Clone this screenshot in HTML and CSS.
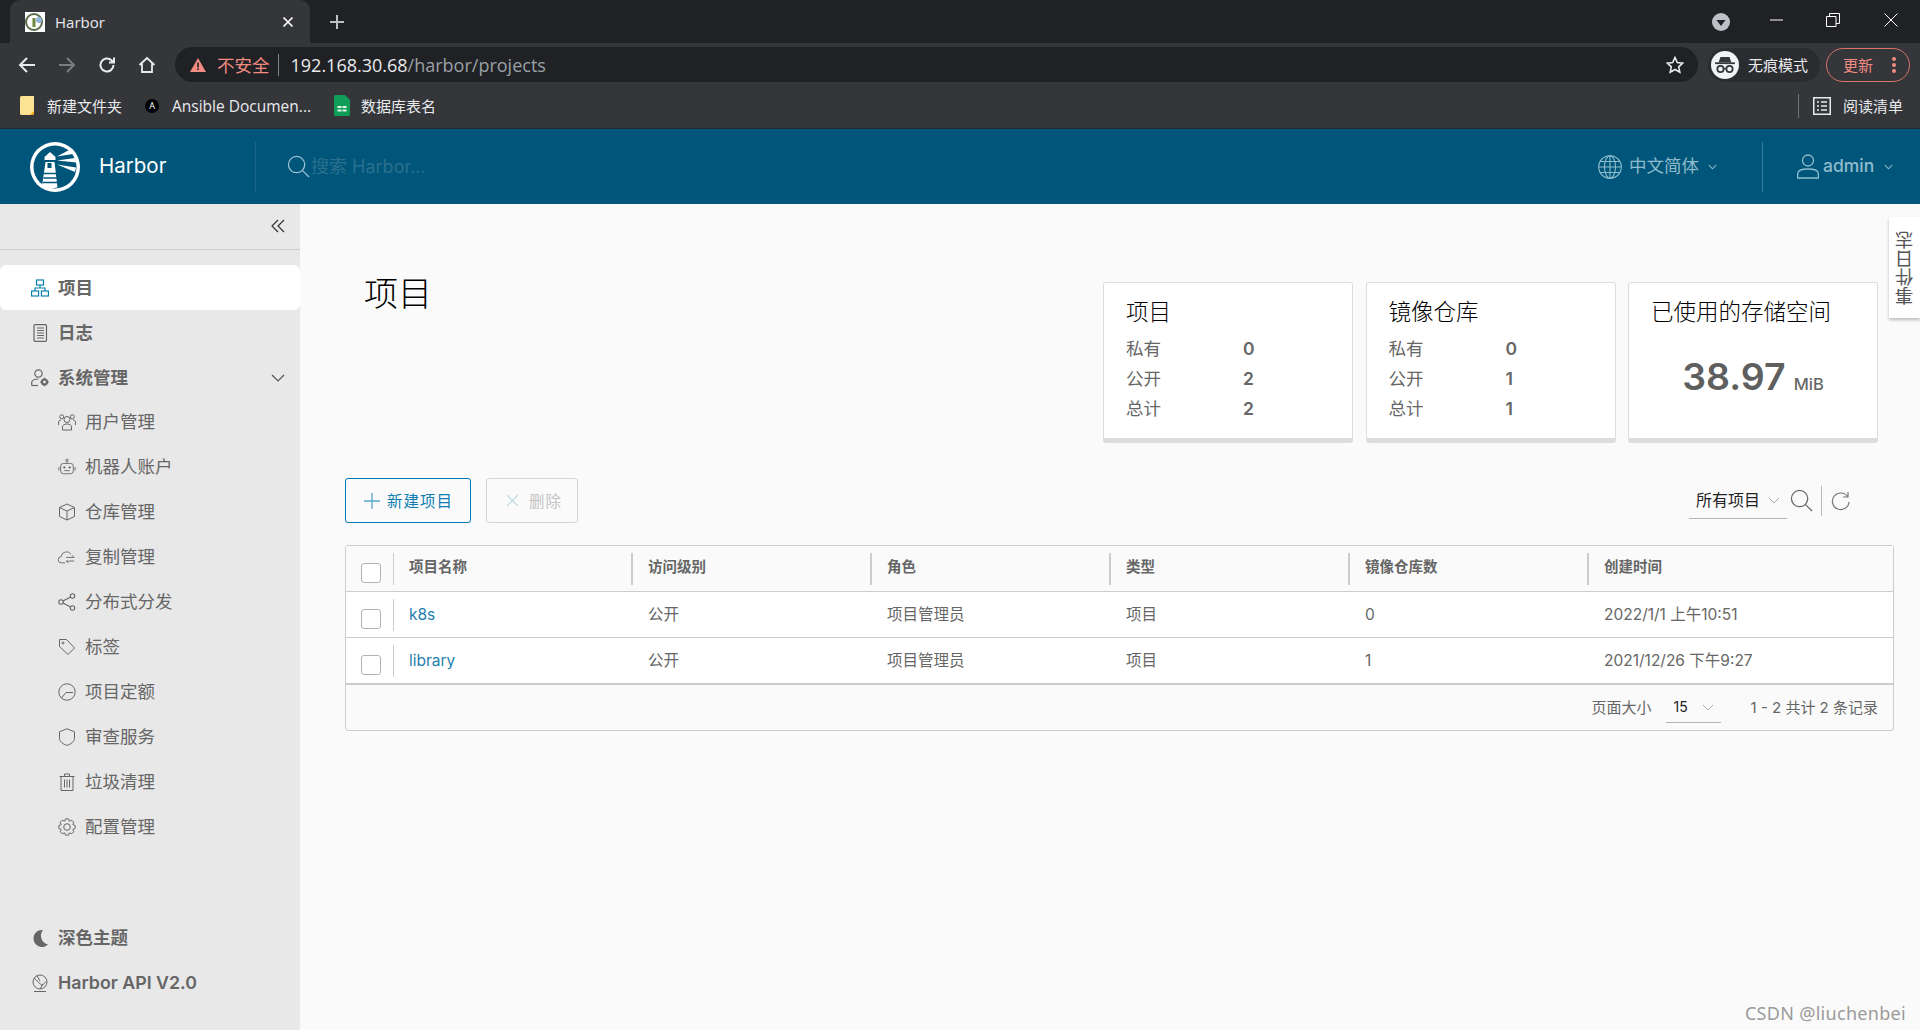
FILE: index.html
```html
<!DOCTYPE html>
<html lang="zh-CN">
<head>
<meta charset="utf-8">
<title>Harbor</title>
<link rel="stylesheet" href="styles.css">
</head>
<body>
<div class="chrome">
  <div class="tabstrip">
    <div class="tab">
      <svg class="favicon" viewBox="0 0 20 20"><rect width="20" height="20" fill="#fff"/><circle cx="9" cy="10" r="8" fill="none" stroke="#5a6b4a" stroke-width="2"/><rect x="7.500" y="6" width="3" height="9" fill="#6c8a3c"/><circle cx="14" cy="8" r="3" fill="#8fb6d8"/></svg>
      <span class="tab-title">Harbor</span>
      <svg class="tab-close" viewBox="0 0 12 12"><path d="M1.500 1.500l9 9M10.500 1.500l-9 9" stroke="#fff" stroke-width="1.700" fill="none"/></svg>
    </div>
    <svg class="newtab" viewBox="0 0 16 16"><path d="M8 1v14M1 8h14" stroke="#bdc1c6" stroke-width="2" fill="none"/></svg>
    <div class="win-controls">
      <svg class="tabsearch" viewBox="0 0 18 18"><circle cx="9" cy="9" r="9" fill="#bdc1c6"/><path d="M4.500 7h9L9 13z" fill="#202124"/></svg>
      <svg class="win-btn win-min" viewBox="0 0 14 14"><path d="M0 7h13" stroke="#fff" stroke-width="1" fill="none"/></svg>
      <svg class="win-btn win-max" viewBox="0 0 14 14"><path d="M.5 3.500h9.500v10H.5zM3.500 3.500V.5h10v10H10" stroke="#fff" stroke-width="1" fill="none"/></svg>
      <svg class="win-btn win-close" viewBox="0 0 14 14"><path d="M.5.5l13 13M13.500.5l-13 13" stroke="#fff" stroke-width="1" fill="none"/></svg>
    </div>
  </div>
  <div class="toolbar">
    <svg class="nav-icon" viewBox="0 0 18 18"><path d="M17 9H2M9 2L2 9l7 7" stroke="#e8eaed" stroke-width="2" fill="none"/></svg>
    <svg class="nav-icon" viewBox="0 0 18 18"><path d="M1 9h15M9 2l7 7-7 7" stroke="#7b7d80" stroke-width="2" fill="none"/></svg>
    <svg class="nav-icon" viewBox="0 0 18 18"><path d="M15.500 9a6.500 6.500 0 1 1-2-4.700L16 6.500M16 1.500v5h-5" stroke="#e8eaed" stroke-width="2" fill="none"/></svg>
    <svg class="nav-icon" viewBox="0 0 18 18"><path d="M1.500 9L9 2l7.500 7M4 7.500V16h10V7.500" stroke="#e8eaed" stroke-width="1.800" fill="none"/></svg>
    <div class="omnibox">
      <svg class="warn" viewBox="0 0 16 14"><path d="M8 0l8 14H0z" fill="#f28b82"/><path d="M7.200 4.500h1.600v5H7.200zM7.200 10.500h1.600v1.600H7.200z" fill="#202124"/></svg>
      <span class="insecure">不安全</span>
      <span class="omni-sep"></span>
      <span class="url-host">192.168.30.68</span><span class="url-path">/harbor/projects</span>
      <svg class="star" viewBox="0 0 18 18"><path d="M9 1.500l2.300 5 5.400.6-4 3.700 1.100 5.400L9 13.500l-4.800 2.700 1.100-5.400-4-3.700 5.400-.6z" fill="none" stroke="#e8eaed" stroke-width="1.600"/></svg>
    </div>
    <div class="incognito">
      <span class="incog-badge"><svg viewBox="0 0 24 20"><path d="M7 1h10l2 6H5z" fill="#35363a"/><path d="M1 8h22" stroke="#35363a" stroke-width="2"/><circle cx="7" cy="14.500" r="3.500" fill="none" stroke="#35363a" stroke-width="2"/><circle cx="17" cy="14.500" r="3.500" fill="none" stroke="#35363a" stroke-width="2"/><path d="M10.500 14h3" stroke="#35363a" stroke-width="1.500"/></svg></span>
      <span>无痕模式</span>
    </div>
    <div class="update"><span>更新</span><svg viewBox="0 0 4 16" class="update-dots"><circle cx="2" cy="2" r="2"/><circle cx="2" cy="8" r="2"/><circle cx="2" cy="14" r="2"/></svg></div>
  </div>
  <div class="bookmarks">
    <div class="bookmark"><svg class="bm-folder" viewBox="0 0 15 19"><path d="M0 1.500A1.500 1.500 0 0 1 1.500 0H14v17a2 2 0 0 1-2 2H1.500A1.500 1.500 0 0 1 0 17.500z" fill="#fde293"/><path d="M10 19l4-4v2a2 2 0 0 1-2 2z" fill="#f9ab00"/></svg><span>新建文件夹</span></div>
    <div class="bookmark"><span class="ansible-logo">A</span><span class="bm-latin">Ansible Documen...</span></div>
    <div class="bookmark"><svg class="bm-sheet" viewBox="0 0 16 21"><path d="M1.500 0H11l5 5v14.500a1.500 1.500 0 0 1-1.500 1.500h-13A1.500 1.500 0 0 1 0 19.500v-18A1.500 1.500 0 0 1 1.500 0z" fill="#0f9d58"/><path d="M3.500 11h4v2h-4zM8.500 11h4v2h-4zM3.500 14.500h4v2h-4zM8.500 14.500h4v2h-4z" fill="#e6f4ea"/></svg><span>数据库表名</span></div>
    <div class="reading-list">
      <svg class="rl-icon" viewBox="0 0 18 18"><rect x=".75" y=".75" width="16.500" height="16.500" fill="none" stroke="#e8eaed" stroke-width="1.500"/><path d="M4 5h2M8 5h6M4 9h2M8 9h6M4 13h2M8 13h6" stroke="#e8eaed" stroke-width="1.500"/></svg>
      <span>阅读清单</span>
    </div>
  </div>
</div>

<header class="app-header">
  <div class="brand">
    <svg class="logo" viewBox="0 0 50 50">
      <circle cx="25" cy="25" r="25" fill="#fff"/>
      <circle cx="25" cy="25" r="21.500" fill="#00567a"/>
      <path d="M12 44.500L15.500 20h9l3 25.500q-8 2-15.500-1z" fill="#fff"/>
      <path d="M20 10l5.500 5v3h-11v-3z" fill="#fff"/>
      <rect x="17.500" y="21" width="4" height="5" fill="#00567a"/>
      <path d="M14 31.500h12M13.500 36h13.500M13 40.500h14" stroke="#00567a" stroke-width="1.300"/>
      <path d="M27 14.500l13-7 3 4.500zM27 18.500l18-2.500 1.500 4.500zM27 22.500l19 3-1 4.500z" fill="#fff"/>
    </svg>
    <span class="brand-name">Harbor</span>
  </div>
  <div class="search">
    <svg class="search-icon" viewBox="0 0 24 24"><circle cx="10" cy="10" r="8.500" fill="none" stroke="#9dc3d4" stroke-width="1.300"/><path d="M16 16l7 7" stroke="#9dc3d4" stroke-width="1.300"/></svg>
    <span class="search-text">搜索 Harbor...</span>
  </div>
  <div class="lang">
    <svg class="globe" viewBox="0 0 24 24" fill="none" stroke="#8fbccd" stroke-width="1.100"><circle cx="12" cy="12" r="11.300"/><ellipse cx="12" cy="12" rx="5.500" ry="11.300"/><path d="M12 .7v22.600M.7 12h22.600M2.300 6.500h19.400M2.300 17.500h19.400"/></svg>
    <span class="hdr-label">中文简体</span>
    <svg class="hdr-caret" viewBox="0 0 10 6"><path d="M1 1l4 4 4-4" fill="none" stroke="#8fbccd" stroke-width="1.200"/></svg>
  </div>
  <div class="user">
    <svg class="user-icon" viewBox="0 0 22 25" fill="none" stroke="#8fbccd" stroke-width="1.300"><circle cx="11" cy="6.500" r="5.500"/><path d="M.7 24v-4.500c0-3 4.500-4.500 10.300-4.500s10.300 1.500 10.300 4.500V24z"/></svg>
    <span class="hdr-label">admin</span>
    <svg class="hdr-caret" viewBox="0 0 10 6"><path d="M1 1l4 4 4-4" fill="none" stroke="#8fbccd" stroke-width="1.200"/></svg>
  </div>
</header>

<div class="workspace">
  <aside class="sidebar">
    <div class="collapse-row">
      <svg class="collapse" viewBox="0 0 14 14"><path d="M7 1L1 7l6 6M13 1L7 7l6 6" fill="none" stroke="#333" stroke-width="1.200"/></svg>
    </div>
    <nav class="nav">
      <a class="nav-item top active"><svg class="ni" viewBox="0 0 18 18" fill="none" stroke="#0f7fb3" stroke-width="1.200"><rect x="5.500" y="1" width="7" height="5"/><rect x=".6" y="12" width="7" height="5"/><rect x="10.400" y="12" width="7" height="5"/><path d="M9 6v3M4 12V9h10v3"/></svg>项目</a>
      <a class="nav-item top"><svg class="ni" viewBox="0 0 18 18" fill="none" stroke="#666" stroke-width="1.200"><rect x="3" y=".7" width="12.500" height="16.600" rx="1"/><path d="M6 4h7M6 6.500h7M6 9h7M6 11.500h7M6 14h7"/></svg>日志</a>
      <a class="nav-item top"><svg class="ni" viewBox="0 0 18 18" fill="none" stroke="#666" stroke-width="1.200"><circle cx="7.500" cy="4.500" r="3.700"/><path d="M.7 16.500v-3c0-2 3-3.500 6.500-3.500"/><path d="M7 16.500H.7"/><circle cx="13.500" cy="13" r="2.500" stroke-width="2.200"/><path d="M13.500 8.800v1.500M13.500 15.700v1.500M9.300 13h1.500M16.200 13h1.500" stroke-width="1.500"/></svg>系统管理<svg class="nav-caret" viewBox="0 0 14 8"><path d="M1 1l6 6 6-6" fill="none" stroke="#555" stroke-width="1.200"/></svg></a>
      <a class="nav-item sub"><svg class="ni" viewBox="0 0 18 18" fill="none" stroke="#666" stroke-width="1"><circle cx="9" cy="6.500" r="3"/><path d="M4.500 17v-3c0-2 2-3 4.500-3s4.500 1 4.500 3v3z"/><circle cx="3.700" cy="3.800" r="2"/><circle cx="14.300" cy="3.800" r="2"/><path d="M.6 12V9c0-1.200 1-2 2.400-2M17.400 12V9c0-1.200-1-2-2.400-2"/></svg>用户管理</a>
      <a class="nav-item sub"><svg class="ni" viewBox="0 0 20 20" fill="none" stroke="#666" stroke-width="1"><rect x="3" y="6" width="14" height="11.500" rx="3"/><circle cx="10" cy="2.500" r="1.300"/><path d="M10 3.800V6M1 10v4M19 10v4M7 14h6"/><circle cx="7" cy="10.500" r=".8" fill="#666"/><circle cx="13" cy="10.500" r=".8" fill="#666"/></svg>机器人账户</a>
      <a class="nav-item sub"><svg class="ni" viewBox="0 0 18 18" fill="none" stroke="#666" stroke-width="1"><path d="M9 1l7.500 3.500v9L9 17l-7.500-3.500v-9zM1.500 4.500L9 8l7.500-3.500M9 8v9"/></svg>仓库管理</a>
      <a class="nav-item sub"><svg class="ni" viewBox="0 0 20 18" fill="none" stroke="#666" stroke-width="1"><path d="M8 15.500H4a3.500 3.500 0 0 1-.5-7A6 6 0 0 1 14.500 6"/><path d="M9 9.500h9M15.500 7l2.500 2.500M9 13.500h9M9 13.500l2.500 2"/></svg>复制管理</a>
      <a class="nav-item sub"><svg class="ni" viewBox="0 0 18 18" fill="none" stroke="#666" stroke-width="1.100"><circle cx="3" cy="9" r="2.200"/><circle cx="14.500" cy="3" r="2.200"/><circle cx="14.500" cy="15" r="2.200"/><path d="M5 8l7.500-4M5 10l7.500 4"/></svg>分布式分发</a>
      <a class="nav-item sub"><svg class="ni" viewBox="0 0 18 18" fill="none" stroke="#666" stroke-width="1"><path d="M1.500 1.500h7l8 8.500-6.500 6.500-8.500-8z"/><circle cx="5" cy="5" r="1"/></svg>标签</a>
      <a class="nav-item sub"><svg class="ni" viewBox="0 0 18 18" fill="none" stroke="#666" stroke-width="1"><circle cx="9" cy="9" r="8.200"/><path d="M3.500 15L8 9.500h7"/></svg>项目定额</a>
      <a class="nav-item sub"><svg class="ni" viewBox="0 0 18 18" fill="none" stroke="#666" stroke-width="1"><path d="M9 .8l7.500 3v6.500c0 3.200-3.500 6-7.500 7-4-1-7.500-3.800-7.500-7V3.800z"/></svg>审查服务</a>
      <a class="nav-item sub"><svg class="ni" viewBox="0 0 18 18" fill="none" stroke="#666" stroke-width="1"><path d="M1.500 3.500h15M3 3.500v14h12v-14M6.500 3.500V1h5v2.500M6.500 6.500v8M9 6.500v8M11.500 6.500v8"/></svg>垃圾清理</a>
      <a class="nav-item sub"><svg class="ni" viewBox="0 0 18 18" fill="none" stroke="#666" stroke-width="1" stroke-linejoin="round"><polygon points="14.820,6.590 17.170,7.560 17.170,10.440 14.820,11.410 15.800,13.760 13.760,15.800 11.410,14.820 10.440,17.170 7.560,17.170 6.590,14.820 4.240,15.800 2.200,13.760 3.180,11.410 .83,10.440 .83,7.560 3.180,6.590 2.200,4.240 4.240,2.200 6.590,3.180 7.560,.83 10.440,.83 11.410,3.180 13.760,2.200 15.800,4.240"/><circle cx="9" cy="9" r="3.300"/></svg>配置管理</a>
    </nav>
    <div class="nav-bottom">
      <a class="nav-item top"><svg class="ni" viewBox="0 0 18 18"><path d="M12 1a8.500 8.500 0 1 0 5 14.500A9 9 0 0 1 12 1z" fill="#666"/></svg>深色主题</a>
      <a class="nav-item top api"><svg class="ni" viewBox="0 0 18 18" fill="none" stroke="#666" stroke-width="1"><circle cx="9" cy="8" r="7"/><path d="M3 4l8 7.500 4-4M6 1.500L9 7M9 15l3-5M3 17.500h12"/></svg>Harbor API V2.0</a>
    </div>
  </aside>

  <main class="main">
    <div class="summary">
      <h1 class="page-title">项目</h1>
      <div class="cards">
        <section class="card">
          <h2 class="card-title">项目</h2>
          <div class="stat"><span class="stat-label">私有</span><span class="stat-val">0</span></div>
          <div class="stat"><span class="stat-label">公开</span><span class="stat-val">2</span></div>
          <div class="stat"><span class="stat-label">总计</span><span class="stat-val">2</span></div>
        </section>
        <section class="card">
          <h2 class="card-title">镜像仓库</h2>
          <div class="stat"><span class="stat-label">私有</span><span class="stat-val">0</span></div>
          <div class="stat"><span class="stat-label">公开</span><span class="stat-val">1</span></div>
          <div class="stat"><span class="stat-label">总计</span><span class="stat-val">1</span></div>
        </section>
        <section class="card">
          <h2 class="card-title">已使用的存储空间</h2>
          <div class="storage"><span class="storage-num">38.97</span><span class="storage-unit">MiB</span></div>
        </section>
      </div>
    </div>

    <div class="actions">
      <button class="btn btn-primary"><svg class="btn-icon" viewBox="0 0 16 16"><path d="M8 0v16M0 8h16" stroke="#5aa9cc" stroke-width="1.300" fill="none"/></svg><span class="btn-label">新建项目</span></button>
      <button class="btn btn-disabled"><svg class="btn-icon-x" viewBox="0 0 14 14"><path d="M1 1l12 12M13 1L1 13" stroke="#b5d5e2" stroke-width="1.200" fill="none"/></svg><span class="btn-label">删除</span></button>
      <div class="filter">
        <div class="select"><span>所有项目</span><svg class="sel-caret" viewBox="0 0 12 7"><path d="M1 1l5 5 5-5" fill="none" stroke="#aaa" stroke-width="1"/></svg></div>
        <svg class="f-search" viewBox="0 0 24 24"><circle cx="10" cy="10" r="8.500" fill="none" stroke="#666" stroke-width="1.300"/><path d="M16 16l7 7" stroke="#666" stroke-width="1.300"/></svg>
        <span class="f-sep"></span>
        <svg class="f-refresh" viewBox="0 0 20 20"><path d="M16.500 5.500A8.300 8.300 0 1 0 18 11M17 1v5h-5" fill="none" stroke="#777" stroke-width="1.200"/></svg>
      </div>
    </div>

    <div class="datagrid">
      <div class="row head">
        <div class="cell check"><span class="checkbox"></span></div>
        <div class="cell">项目名称</div><div class="cell">访问级别</div><div class="cell">角色</div><div class="cell">类型</div><div class="cell">镜像仓库数</div><div class="cell">创建时间</div>
      </div>
      <div class="row">
        <div class="cell check"><span class="checkbox"></span></div>
        <div class="cell"><a class="link">k8s</a></div><div class="cell">公开</div><div class="cell">项目管理员</div><div class="cell">项目</div><div class="cell">0</div><div class="cell">2022/1/1 上午10:51</div>
      </div>
      <div class="row last">
        <div class="cell check"><span class="checkbox"></span></div>
        <div class="cell"><a class="link">library</a></div><div class="cell">公开</div><div class="cell">项目管理员</div><div class="cell">项目</div><div class="cell">1</div><div class="cell">2021/12/26 下午9:27</div>
      </div>
      <div class="grid-foot">
        <span>页面大小</span>
        <div class="page-select"><span>15</span><svg class="sel-caret" viewBox="0 0 12 7"><path d="M1 1l5 5 5-5" fill="none" stroke="#aaa" stroke-width="1"/></svg></div>
        <span>1 - 2 共计 2 条记录</span>
      </div>
    </div>

    <div class="event-tab"><span>事件日志</span></div>
    <div class="watermark">CSDN @liuchenbei</div>
  </main>
</div>
</body>
</html>
```
FILE: styles.css
```css
* { box-sizing: border-box; }
html, body { margin: 0; padding: 0; height: 100%; overflow: hidden; }
body {
  display: flex; flex-direction: column; width: 1920px; height: 1030px;
  font-family: Inter, "Noto Sans CJK SC", sans-serif; color: #666; background: #fafafa;
  line-height: 22px;
}
.chrome { font-family: "Open Sans", "Noto Sans CJK SC", sans-serif; color: #e8eaed; flex: none; }
.tabstrip { height: 43px; background: #202124; display: flex; align-items: center; padding-left: 10px; }
.tab { width: 300px; height: 43px; background: #35363a; border-radius: 10px 10px 0 0; display: flex; align-items: center; padding: 0 15px; align-self: flex-end; }
.favicon { width: 20px; height: 20px; margin-right: 10px; }
.tab-title { font-size: 15px; flex: 1; color: #e8eaed; }
.tab-close { width: 12px; height: 12px; margin-right: 1px; }
.newtab { width: 16px; height: 16px; margin-left: 19px; }
.win-controls { margin-left: auto; display: flex; align-items: center; padding-right: 22px; }
.tabsearch { width: 18px; height: 18px; margin-right: 40px; margin-top: 1px; }
.win-btn { width: 14px; height: 14px; }
.win-min { margin-right: 42px; margin-top: -3px; }
.win-max { margin-right: 44px; margin-top: -4px; }
.win-close { margin-top: -4px; }

.toolbar { height: 40px; background: #35363a; display: flex; align-items: center; padding-left: 18px; padding-top: 3px; }
.nav-icon { width: 18px; height: 18px; margin-right: 22px; flex: none; }
.omnibox { width: 1523px; height: 35px; margin-left: -3px; background: #202124; border-radius: 18px; display: flex; align-items: center; padding: 0 14px 0 15px; }
.warn { width: 16px; height: 14px; margin-right: 11px; }
.insecure { font-size: 17.500px; color: #f28b82; }
.omni-sep { width: 1px; height: 22px; background: #80868b; margin: 0 12px 0 8px; }
.url-host { font-size: 18px; color: #e8eaed; }
.url-path { font-size: 18px; color: #9aa0a6; }
.star { width: 18px; height: 18px; margin-left: auto; }
.incognito { width: 112px; height: 34px; margin-left: 10px; border-radius: 17px; background: #2b2c30; display: flex; align-items: center; font-size: 15px; color: #e8eaed; padding-left: 3px; gap: 9px; }
.incog-badge { width: 28px; height: 28px; border-radius: 50%; background: #f1f3f4; display: flex; align-items: center; justify-content: center; }
.incog-badge svg { width: 22px; height: 18px; }
.update { width: 84px; height: 34px; margin-left: 6px; border: 1px solid #d9736b; border-radius: 17px; color: #f28b82; font-size: 15px; display: flex; align-items: center; padding-left: 16px; }
.update-dots { width: 4px; height: 16px; margin-left: 19px; fill: #f28b82; }

.bookmarks { height: 46px; background: #35363a; display: flex; align-items: center; padding-left: 20px; border-bottom: 1px solid #26272a; font-size: 15px; }
.bookmark { display: flex; align-items: center; margin-right: 23px; color: #e8eaed; }
.bm-latin { font-size: 15.500px; }
.bm-folder { width: 15px; height: 19px; margin-right: 12px; }
.ansible-logo { width: 14px; height: 14px; border-radius: 50%; background: #000; color: #fff; font-size: 9px; line-height: 14px; text-align: center; margin-right: 13px; }
.bm-sheet { width: 16px; height: 21px; margin-right: 11px; }
.reading-list { margin-left: auto; display: flex; align-items: center; height: 24px; border-left: 1px solid #6e7074; padding-left: 14px; padding-right: 17px; }
.rl-icon { width: 18px; height: 18px; margin-right: 12px; }

.app-header { height: 75px; flex: none; background: #00567a; display: flex; align-items: center; color: #8fbccd; }
.brand { width: 256px; height: 50px; display: flex; align-items: center; padding-left: 30px; border-right: 1px solid #1a6787; }
.logo { width: 50px; height: 50px; margin-right: 19px; }
.brand-name { font-size: 20.500px; color: #fff; font-weight: 400; padding-bottom: 2px; }
.search { display: flex; align-items: center; padding-left: 31px; flex: 1; }
.search-icon { width: 23px; height: 23px; margin-right: 1px; }
.search-text { font-size: 18px; color: #2a6f8e; }
.lang { display: flex; align-items: center; font-size: 17.500px; height: 50px; width: 164px; }
.globe { width: 24px; height: 24px; margin-right: 7px; }
.hdr-label { padding-bottom: 2px; }
.hdr-caret { width: 9px; height: 6px; margin-left: 9px; }
.user { display: flex; align-items: center; font-size: 17.500px; height: 50px; border-left: 1px solid #3a7d99; width: 158px; padding-left: 34px; }
.user-icon { width: 22px; height: 25px; margin-right: 4px; }
.user span { font-weight: 500; }
.user .hdr-caret { margin-left: 10px; }

.workspace { flex: 1; display: flex; min-height: 0; position: relative; }
.sidebar { width: 300px; flex: none; background: #e8e8e8; display: flex; flex-direction: column; }
.collapse-row { height: 46px; flex: none; border-bottom: 1px solid #ccc; display: flex; align-items: center; justify-content: flex-end; padding-right: 15px; }
.collapse { width: 14px; height: 14px; margin-bottom: 1px; }
.nav { padding-top: 15px; }
.nav-item { height: 45px; display: flex; align-items: center; color: #666; font-size: 17.500px; }
.nav-item.top { font-weight: 700; padding-left: 31px; }
.nav-item.active { background: #fff; border-radius: 6px; }
.nav-item.sub { padding-left: 58px; font-weight: 400; padding-bottom: 2px; }
.ni { width: 18px; height: 18px; margin-right: 9px; flex: none; }
.nav-caret { width: 14px; height: 8px; margin-left: auto; margin-right: 15px; }
.nav-bottom { margin-top: auto; padding-bottom: 25px; }
.api { font-family: Inter, sans-serif; font-weight: 600 !important; font-size: 17.800px; }

.main { flex: 1; padding: 78px 26px 0 45px; min-width: 0; }
.summary { display: flex; justify-content: space-between; padding-right: 16px; height: 161px; }
.page-title { margin: -11px 0 0 19px; font-size: 34px; font-weight: 300; color: #000; line-height: 46px; height: 46px; }
.cards { display: flex; gap: 12.500px; }
.card { width: 250px; height: 161px; background: #fff; border: 1px solid #ddd; border-bottom: 5px solid #ddd; border-radius: 3px; padding: 13px 22px; }
.card-title { margin: 0 0 6px; font-size: 22.500px; font-weight: 300; color: #000; line-height: 32px; }
.stat { display: flex; height: 30px; align-items: center; font-size: 17.500px; }
.stat-label { width: 117px; }
.stat-val { font-weight: 600; }
.storage { display: flex; align-items: baseline; justify-content: center; margin-top: 31px; line-height: 36px; }
.storage-num { font-size: 37.500px; font-weight: 600; color: #5f5f5f; }
.storage-unit { font-size: 16.500px; font-weight: 500; margin-left: 8px; }

.actions { display: flex; align-items: center; margin-top: 35px; height: 45px; }
.btn { height: 45px; border-radius: 3px; background: transparent; font-family: Inter, "Noto Sans CJK SC", sans-serif; font-size: 15.500px; letter-spacing: 1px; display: flex; align-items: center; padding: 0; }
.btn-label { padding-bottom: 2px; }
.btn-primary { width: 126px; border: 1px solid #0079b8; color: #0f7fb3; padding-left: 18px; margin-right: 15px; }
.btn-disabled { width: 92px; border: 1px solid #d6d6d6; color: #c4c4c4; padding-left: 19px; }
.btn-icon { width: 16px; height: 16px; margin-right: 7px; }
.btn-icon-x { width: 13px; height: 13px; margin-right: 10px; }
.filter { margin-left: auto; display: flex; align-items: center; padding-right: 43px; }
.select { width: 98px; height: 36px; border-bottom: 1px solid #b3b3b3; display: flex; align-items: center; padding-left: 7px; font-size: 16px; color: #222; }
.sel-caret { width: 12px; height: 7px; margin-left: 8px; }
.f-search { width: 23px; height: 23px; margin-left: 3px; }
.f-sep { width: 1px; height: 30px; background: #bbb; margin: 0 9px 0 8px; }
.f-refresh { width: 20px; height: 20px; }

.datagrid { margin-top: 22px; width: 1549px; height: 186px; border: 1px solid #ccc; border-radius: 3px; background: #fafafa; display: flex; flex-direction: column; }
.row { display: grid; grid-template-columns: 48px repeat(5, 239px) 1fr; height: 46px; background: #fff; border-bottom: 1px solid #ccc; align-items: center; font-size: 15.500px; flex: none; }
.row.head { background: #fafafa; font-weight: 700; font-size: 14.500px; }
.row.last { border-bottom-width: 2px; height: 47px; }
.cell { padding-left: 15px; display: flex; align-items: center; height: 32px; white-space: nowrap; }
.head .cell { border-left: 2px solid #ccc; margin-left: -2px; padding-left: 15px; padding-bottom: 3px; }
.head .cell.check { border-left: 0; margin-left: 0; padding-bottom: 0; border-right: 1px solid #ccc; }
.head .cell.check + .cell { border-left: 0; margin-left: 0; }
.cell.check { padding-left: 15px; border-right: 1px solid #ccc; }
.checkbox { width: 20px; height: 20px; border: 1px solid #b3b3b3; border-radius: 3px; background: #fff; margin-top: 8px; }
.link { color: #1f7fae; }
.grid-foot { flex: 1; display: flex; align-items: center; justify-content: flex-end; padding-right: 15px; font-size: 15px; color: #666; }
.page-select { width: 55px; height: 30px; border-bottom: 1px solid #b3b3b3; margin: 0 30px 0 14px; padding-left: 8px; display: flex; align-items: center; color: #222; font-size: 14px; }
.page-select .sel-caret { margin-left: 14px; }

.event-tab { position: absolute; right: 0; top: 13px; width: 31px; height: 101px; background: #fff; box-shadow: 0 2px 3px rgba(0,0,0,.25); display: flex; align-items: center; justify-content: center; }
.event-tab span { writing-mode: vertical-rl; transform: rotate(180deg); font-size: 18.500px; color: #555; }
.watermark { position: absolute; right: 14px; bottom: 6px; font-family: "Noto Sans", sans-serif; font-size: 18px; color: #9a9a9a; letter-spacing: .3px; }
```
